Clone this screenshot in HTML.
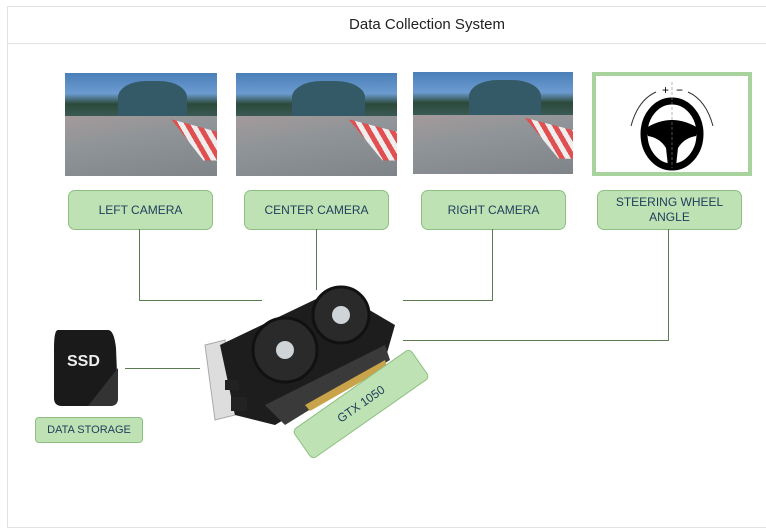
<!DOCTYPE html>
<html><head><style>
body{margin:0;width:766px;height:460px;background:#fff;font-family:"Liberation Sans",sans-serif;overflow:hidden;position:relative}
.card{position:absolute;left:7px;top:6px;width:770px;height:520px;border:1px solid #e2e2e2}
.hdr{position:absolute;left:7px;top:6px;width:770px;height:37px;border-bottom:1px solid #e2e2e2;text-align:center;line-height:37px;font-size:15px;color:#222}
.hdr span{position:relative;left:35px}
.img{position:absolute;overflow:hidden;background:linear-gradient(#4a7fb8 0%,#6c9bd0 20%,#2c4a3a 30%,#3d5d5c 45%,#8a8a8a 55%,#9aa2a5 75%,#b0b4b8 100%)}
.road{position:absolute;left:0;right:0;bottom:0;height:58%;background:linear-gradient(170deg,#a49a9a,#8f9498 40%,#7f8488)}
.hill{position:absolute;left:35%;top:8%;width:45%;height:40%;background:#335a66;border-radius:40% 40% 0 0}
.red{position:absolute;right:0;top:45%;width:30%;height:40%;background:repeating-linear-gradient(60deg,#e05050 0 5px,#eee 5px 10px);clip-path:polygon(0 0,100% 30%,100% 100%,70% 100%)}
.box{position:absolute;background:#bfe2b5;border:1px solid #8dbf80;border-radius:7px;color:#1d3d5a;font-size:12px;text-align:center;display:flex;align-items:center;justify-content:center;line-height:15px}
.l{position:absolute;background:#5a7a50}
</style></head><body>
<div class="card"></div>
<div class="hdr"><span>Data Collection System</span></div>

<div class="img" style="left:65px;top:73px;width:152px;height:103px"><div class="hill"></div><div class="road"></div><div class="red"></div></div>
<div class="img" style="left:236px;top:73px;width:161px;height:103px"><div class="hill"></div><div class="road"></div><div class="red"></div></div>
<div class="img" style="left:413px;top:72px;width:160px;height:102px"><div class="hill"></div><div class="road"></div><div class="red"></div></div>
<div style="position:absolute;left:592px;top:72px;width:152px;height:96px;border:4px solid #a8d39c;background:#fff">
<svg width="152" height="96" viewBox="0 0 152 96">
<ellipse cx="76" cy="58" rx="28" ry="33" fill="none" stroke="#000" stroke-width="7"/>
<path d="M50 52 Q76 36 102 52 L100 60 Q88 62 82 72 L80 90 L72 90 L70 72 Q64 62 52 60Z" fill="#000"/>
<text x="66" y="18" font-size="12" font-family="Liberation Sans">+</text><text x="80" y="18" font-size="12" font-family="Liberation Sans">−</text>
<path d="M35 50 Q42 24 60 16" fill="none" stroke="#333"/><path d="M117 50 Q110 24 92 16" fill="none" stroke="#333"/>
<line x1="76" y1="6" x2="76" y2="92" stroke="#888" stroke-dasharray="3 2" stroke-width=".6"/>
</svg></div>

<div class="box" style="left:68px;top:190px;width:143px;height:38px">LEFT CAMERA</div>
<div class="box" style="left:244px;top:190px;width:143px;height:38px">CENTER CAMERA</div>
<div class="box" style="left:421px;top:190px;width:143px;height:38px">RIGHT CAMERA</div>
<div class="box" style="left:597px;top:190px;width:143px;height:38px">STEERING WHEEL<br>ANGLE</div>

<div class="l" style="left:139px;top:229px;width:1px;height:72px"></div>
<div class="l" style="left:139px;top:300px;width:123px;height:1px"></div>
<div class="l" style="left:316px;top:229px;width:1px;height:61px"></div>
<div class="l" style="left:492px;top:229px;width:1px;height:72px"></div>
<div class="l" style="left:403px;top:300px;width:90px;height:1px"></div>
<div class="l" style="left:668px;top:229px;width:1px;height:112px"></div>
<div class="l" style="left:403px;top:340px;width:266px;height:1px"></div>
<div class="l" style="left:125px;top:368px;width:75px;height:1px"></div>

<svg style="position:absolute;left:195px;top:285px" width="240" height="150" viewBox="0 0 240 150">
<path d="M10 60 L30 55 L40 130 L20 135Z" fill="#ddd" stroke="#aaa"/>
<path d="M25 60 L140 5 L200 40 L190 75 L80 140 L40 130Z" fill="#1d1d1d"/>
<path d="M70 120 L190 60 L195 75 L90 140Z" fill="#3a3a3a"/>
<path d="M110 120 L190 75 L192 82 L115 126Z" fill="#c9a34a"/>
<circle cx="90" cy="65" r="32" fill="#2a2a2a" stroke="#111" stroke-width="3"/>
<circle cx="146" cy="30" r="28" fill="#2a2a2a" stroke="#111" stroke-width="3"/>
<circle cx="90" cy="65" r="9" fill="#cfd4d8"/><circle cx="146" cy="30" r="9" fill="#cfd4d8"/>
<rect x="30" y="95" width="14" height="10" fill="#222"/><rect x="36" y="112" width="16" height="14" fill="#222"/>
</svg>

<svg style="position:absolute;left:48px;top:328px" width="76" height="80" viewBox="0 0 76 80">
<path d="M10 2 L60 2 Q66 2 68 20 L70 70 Q70 78 62 78 L14 78 Q6 78 6 70 L6 20 Q6 2 10 2Z" fill="#1a1a1a"/>
<path d="M40 78 L70 40 L70 70 Q70 78 62 78Z" fill="#333"/>
<text x="19" y="38" font-size="16" font-weight="bold" fill="#eee" font-family="Liberation Sans">SSD</text>
</svg>

<div class="box" style="left:35px;top:417px;width:106px;height:24px;border-radius:4px;font-size:11px">DATA STORAGE</div>
<div class="box" style="left:289px;top:386px;width:142px;height:34px;transform:rotate(-35deg);border-radius:5px;font-size:12px">GTX 1050</div>
</body></html>
